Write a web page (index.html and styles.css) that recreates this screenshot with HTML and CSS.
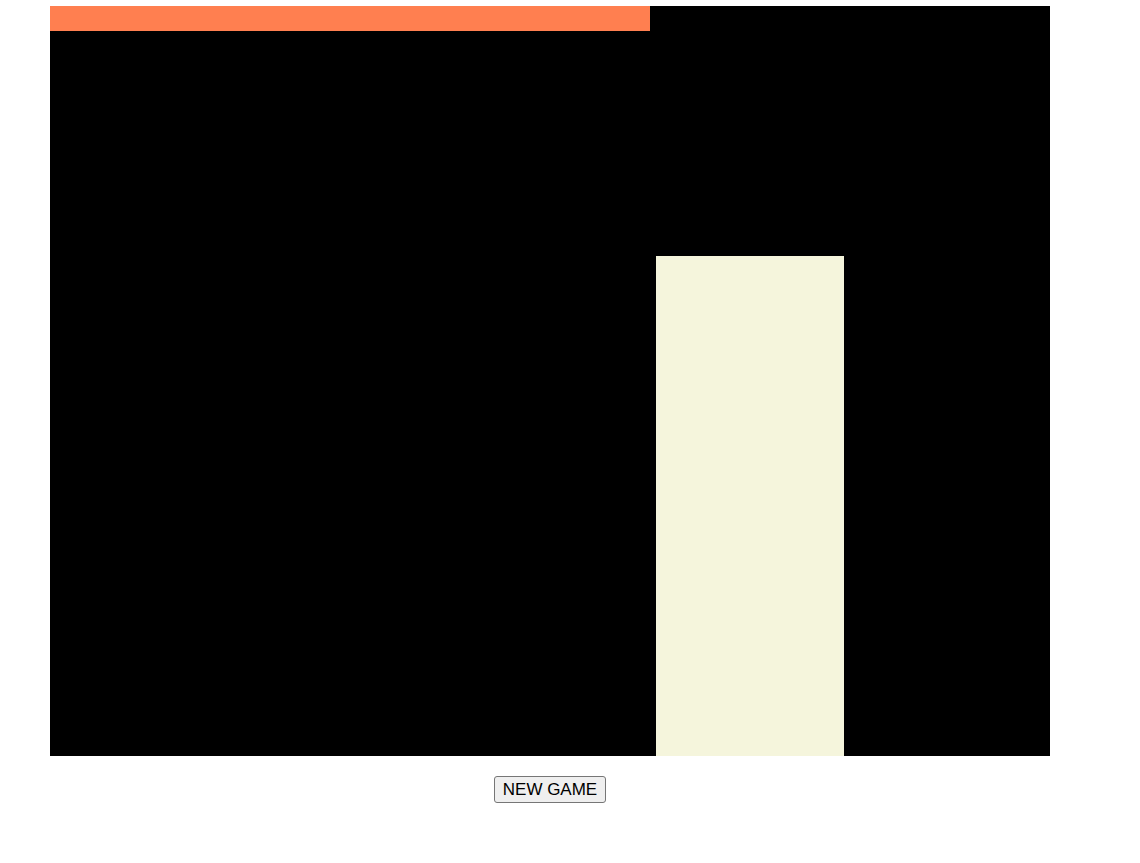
FILE: index.html
```html
<!DOCTYPE html>
<html>
<head>
<meta charset="utf-8">
<link rel="stylesheet" href="styles.css">
</head>
<body>
<div class="game">
  <div class="board">
    <div class="timer" style="width:600px"></div>
    <div class="block" style="left:606px;top:250px;width:188px;height:500px"></div>
  </div>
  <div class="controls">
    <button class="new-game">NEW GAME</button>
  </div>
</div>
</body>
</html>
```
FILE: styles.css
```css
html, body {
  margin: 0;
  padding: 0;
  background: #ffffff;
}
.game {
  width: 1000px;
  margin: 6px 0 0 50px;
  display: flex;
  flex-direction: column;
  align-items: center;
}
.board {
  position: relative;
  width: 1000px;
  height: 750px;
  background: #000000;
}
.timer {
  height: 25px;
  background: #ff7f50;
}
.block {
  position: absolute;
  background: #f5f5dc;
}
.controls {
  margin-top: 20px;
  display: flex;
  justify-content: center;
}
.new-game {
  font-family: "Liberation Sans", Arial, sans-serif;
  font-size: 17px;
  height: 27px;
  padding: 1px 8px;
  background: #efefef;
  color: #000;
  border: 1px solid #767676;
  border-radius: 3px;
}
```
